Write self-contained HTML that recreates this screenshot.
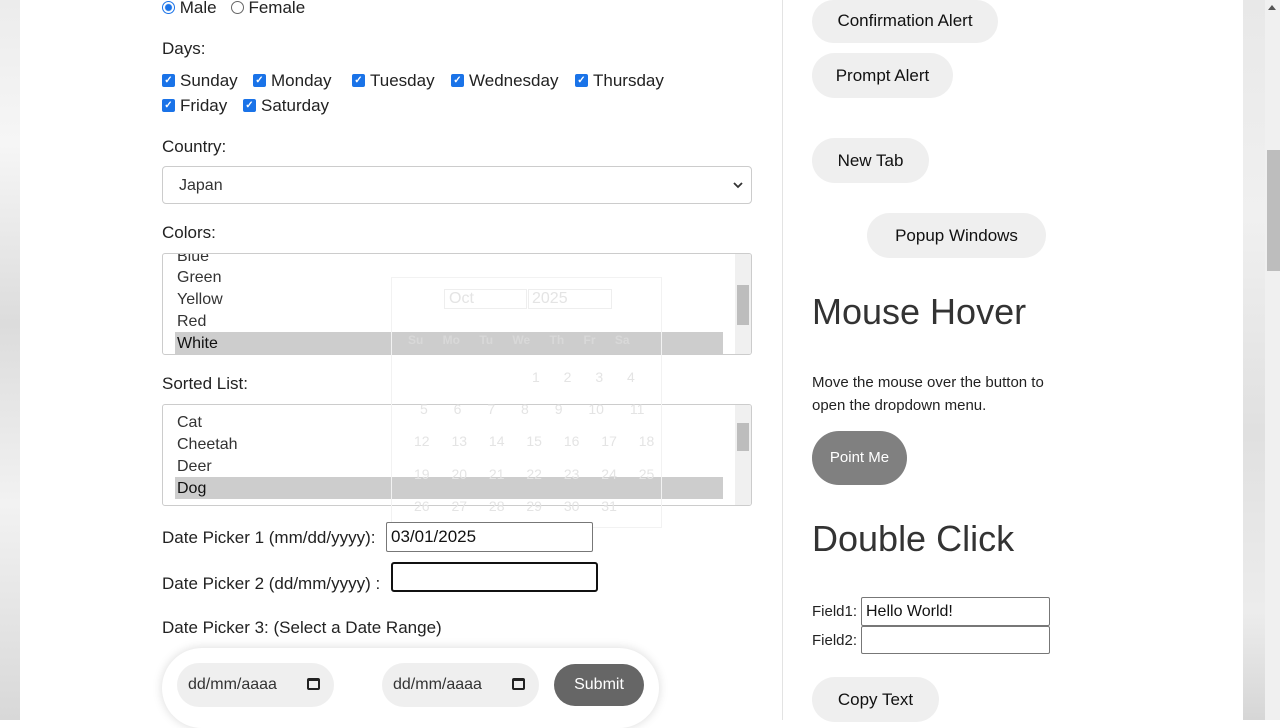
<!DOCTYPE html>
<html><head><meta charset="utf-8"><style>
*{box-sizing:border-box;margin:0;padding:0}
body{width:1280px;height:720px;overflow:hidden;background:#fff;font-family:"Liberation Sans",sans-serif;color:#222;position:relative}
.a{position:absolute;white-space:nowrap}
.l{font-size:17px}
.bgL{position:absolute;left:0;top:0;width:20px;height:720px;background:linear-gradient(180deg,#ececec,#f6f6f6 20%,#dcdcdc 45%,#f2f2f2 70%,#d8d8d8)}
.bgR{position:absolute;left:1243px;top:0;width:22px;height:720px;background:linear-gradient(180deg,#e8e8e8,#f0f0f0 30%,#e0e0e0 60%,#ececec 85%,#d6d6d6)}
.sb{position:absolute;left:1265px;top:0;width:15px;height:720px;background:#f0f0f0}
.cb{position:absolute;width:13px;height:13px;background:#1a73e8;border-radius:2px;color:#fff;font-size:10px;line-height:13px;text-align:center;font-weight:bold}
.box{position:absolute;border:1px solid #ccc;border-radius:4px;background:#fff}
.pill{position:absolute;background:#efefef;border-radius:24px;font-size:17px;text-align:center;color:#111}
.it{position:absolute;left:14px;font-size:16px;color:#333}
.sel{position:absolute;left:12px;width:548px;height:22px;background:#cdcdcd}
.cal{position:absolute;left:391px;top:277px;width:271px;height:251px;border:1px solid #f2f2f2;color:#e4e4e4;font-size:14px}
.cal span{position:absolute}
h2{position:absolute;font-weight:normal;font-size:36px;color:#333;left:812px}
.inp{position:absolute;border:1px solid #777;border-radius:2px;background:#fff;font-size:17px;padding-left:4px;color:#111}
</style></head><body>
<div class="bgL"></div><div class="bgR"></div>
<div class="sb"><div style="position:absolute;left:3px;top:5px;border:4px solid transparent;border-bottom:5px solid #555;border-top:0;width:0"></div><div style="position:absolute;left:2px;top:150px;width:13px;height:121px;background:#bdbdbd"></div></div>
<div class="a" style="left:782px;top:0;width:1px;height:720px;background:#e3e3e3"></div>

<div class="a l" style="left:162px;top:-2px"><span style="display:inline-block;width:13px;height:13px;border:1px solid #1a73e8;border-radius:50%;vertical-align:-1px;background:radial-gradient(#1a73e8 3px,#fff 4px)"></span> Male &nbsp; <span style="display:inline-block;width:13px;height:13px;border:1px solid #666;border-radius:50%;vertical-align:-1px"></span> Female</div>
<div class="a l" style="left:162px;top:39px">Days:</div>
<span class="cb" style="left:162px;top:74px">✓</span><div class="a l" style="left:180px;top:71px">Sunday</div>
<span class="cb" style="left:253px;top:74px">✓</span><div class="a l" style="left:271px;top:71px">Monday</div>
<span class="cb" style="left:352px;top:74px">✓</span><div class="a l" style="left:370px;top:71px">Tuesday</div>
<span class="cb" style="left:451px;top:74px">✓</span><div class="a l" style="left:469px;top:71px">Wednesday</div>
<span class="cb" style="left:575px;top:74px">✓</span><div class="a l" style="left:593px;top:71px">Thursday</div>
<span class="cb" style="left:162px;top:99px">✓</span><div class="a l" style="left:180px;top:96px">Friday</div>
<span class="cb" style="left:243px;top:99px">✓</span><div class="a l" style="left:261px;top:96px">Saturday</div>
<div class="a l" style="left:162px;top:137px">Country:</div>
<div class="box" style="left:162px;top:166px;width:590px;height:38px"><span class="it" style="top:10px;left:16px">Japan</span><svg class="a" style="right:8px;top:15px" width="10" height="7" viewBox="0 0 10 7"><path d="M1 1l4 4 4-4" stroke="#333" stroke-width="1.8" fill="none"/></svg></div>
<div class="a l" style="left:162px;top:223px">Colors:</div>
<div class="box" style="left:162px;top:253px;width:590px;height:102px;overflow:hidden;border-radius:3px">
<span class="it" style="top:-6px">Blue</span><span class="it" style="top:15px">Green</span><span class="it" style="top:37px">Yellow</span><span class="it" style="top:59px">Red</span>
<div class="sel" style="top:78px"></div><span class="it" style="top:81px;color:#111">White</span>
<div style="position:absolute;right:0;top:0;width:16px;height:100px;background:#f0f0f0"><div style="position:absolute;left:2px;top:31px;width:12px;height:40px;background:#bdbdbd"></div></div>
</div>
<div class="a l" style="left:162px;top:374px">Sorted List:</div>
<div class="box" style="left:162px;top:404px;width:590px;height:102px;overflow:hidden;border-radius:3px">
<span class="it" style="top:9px">Cat</span><span class="it" style="top:31px">Cheetah</span><span class="it" style="top:53px">Deer</span>
<div class="sel" style="top:72px"></div><span class="it" style="top:75px;color:#111">Dog</span>
<div style="position:absolute;right:0;top:0;width:16px;height:100px;background:#f0f0f0"><div style="position:absolute;left:2px;top:18px;width:12px;height:28px;background:#bdbdbd"></div></div>
</div>
<div class="cal">
<span style="left:52px;top:11px;width:83px;height:20px;border:1px solid #eee;padding-left:4px;font-size:16px">Oct</span>
<span style="left:136px;top:11px;width:84px;height:20px;border:1px solid #eee;padding-left:3px;font-size:16px">2025</span>
<span style="left:16px;top:55px;font-weight:bold;font-size:12px;word-spacing:16px;color:#d8d8d8">Su Mo Tu We Th Fr Sa</span>
<span style="left:140px;top:91px;word-spacing:20px">1 2 3 4</span>
<span style="left:28px;top:123px;word-spacing:22px">5 6 7 8 9 10 11</span>
<span style="left:22px;top:155px;word-spacing:18px">12 13 14 15 16 17 18</span>
<span style="left:22px;top:188px;word-spacing:18px">19 20 21 22 23 24 25</span>
<span style="left:22px;top:220px;word-spacing:18px">26 27 28 29 30 31</span>
</div>
<div class="a l" style="left:162px;top:528px">Date Picker 1 (mm/dd/yyyy):</div>
<div class="inp" style="left:386px;top:522px;width:207px;height:30px;line-height:28px">03/01/2025</div>
<div class="a l" style="left:162px;top:574px">Date Picker 2 (dd/mm/yyyy) :</div>
<div class="inp" style="left:391px;top:562px;width:207px;height:30px;border:2px solid #111;border-radius:3px"></div>
<div class="a l" style="left:162px;top:618px">Date Picker 3: (Select a Date Range)</div>
<div class="a" style="left:162px;top:648px;width:497px;height:80px;border-radius:40px;background:#fff;box-shadow:0 0 10px rgba(0,0,0,.15)"></div>
<div class="pill" style="left:177px;top:663px;width:157px;height:44px;line-height:44px;font-size:16px;color:#333;text-align:left;padding-left:11px">dd/mm/aaaa <span style="position:absolute;left:130px;top:15px;width:13px;height:12px;border:2px solid #222;border-top-width:3px;border-radius:2px"></span></div>
<div class="pill" style="left:382px;top:663px;width:157px;height:44px;line-height:44px;font-size:16px;color:#333;text-align:left;padding-left:11px">dd/mm/aaaa <span style="position:absolute;left:130px;top:15px;width:13px;height:12px;border:2px solid #222;border-top-width:3px;border-radius:2px"></span></div>
<div class="pill" style="left:554px;top:664px;width:90px;height:42px;line-height:42px;background:#666;color:#fff;font-size:16px">Submit</div>

<div class="pill" style="left:812px;top:0;width:186px;height:43px;line-height:41px;border-radius:22px">Confirmation Alert</div>
<div class="pill" style="left:812px;top:53px;width:141px;height:45px;line-height:45px">Prompt Alert</div>
<div class="pill" style="left:812px;top:138px;width:117px;height:45px;line-height:45px">New Tab</div>
<div class="pill" style="left:867px;top:213px;width:179px;height:45px;line-height:45px">Popup Windows</div>
<h2 style="top:291px">Mouse Hover</h2>
<div class="a" style="left:812px;top:371px;font-size:15px;line-height:23px;color:#222">Move the mouse over the button to<br>open the dropdown menu.</div>
<div class="pill" style="left:812px;top:431px;width:95px;height:54px;line-height:54px;background:#808080;color:#fff;border-radius:27px;font-size:15px">Point Me</div>
<h2 style="top:518px">Double Click</h2>
<div class="a" style="left:812px;top:603px;font-size:15px">Field1:</div>
<div class="inp" style="left:861px;top:597px;width:189px;height:29px;line-height:27px;font-size:16px">Hello World!</div>
<div class="a" style="left:812px;top:632px;font-size:15px">Field2:</div>
<div class="inp" style="left:861px;top:626px;width:189px;height:28px"></div>
<div class="pill" style="left:812px;top:677px;width:127px;height:45px;line-height:45px">Copy Text</div>
</body></html>
